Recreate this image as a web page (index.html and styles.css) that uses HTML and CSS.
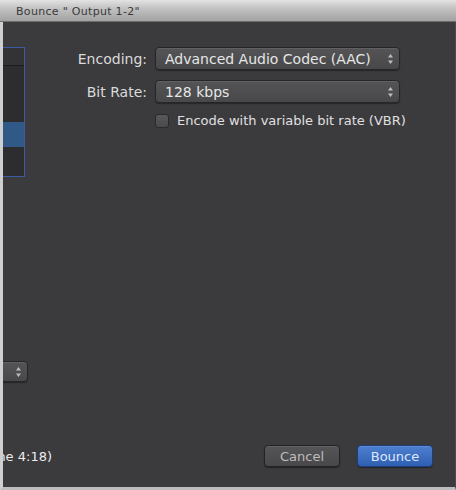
FILE: index.html
```html
<!doctype html>
<html>
<head>
	<meta charset="utf-8" />
	<title>Bounce</title>
	<link rel="stylesheet" href="styles.css">
</head>

<body>
	<div class="window">

		<div class="titlebar">Bounce " Output 1-2"</div>

		<div class="sheet">

			<div class="side">
				<div class="list">
					<div class="list-head"></div>
					<div class="list-row"></div>
					<div class="list-row"></div>
					<div class="list-row selected"></div>
					<div class="list-row"></div>
				</div>
				<div class="popup popup-small">
					<span class="popup-text"></span>
					<svg class="arrows" width="7" height="12" viewBox="0 0 7 12"><path d="M3.5 1 L6 4.5 L1 4.5 Z M3.5 11 L6 7.5 L1 7.5 Z" fill="#bdbdbd"/></svg>
				</div>
				<div class="status">(Realtime 4:18)</div>
			</div>

			<div class="main">
				<div class="form">
					<label class="label">Encoding:</label>
					<div class="popup">
						<span class="popup-text">Advanced Audio Codec (AAC)</span>
						<svg class="arrows" width="7" height="12" viewBox="0 0 7 12"><path d="M3.5 1 L6 4.5 L1 4.5 Z M3.5 11 L6 7.5 L1 7.5 Z" fill="#bdbdbd"/></svg>
					</div>

					<label class="label">Bit Rate:</label>
					<div class="popup">
						<span class="popup-text">128 kbps</span>
						<svg class="arrows" width="7" height="12" viewBox="0 0 7 12"><path d="M3.5 1 L6 4.5 L1 4.5 Z M3.5 11 L6 7.5 L1 7.5 Z" fill="#bdbdbd"/></svg>
					</div>

					<span></span>
					<div class="check">
						<span class="box"></span>
						<span>Encode with variable bit rate (VBR)</span>
					</div>
				</div>

				<div class="buttons">
					<button class="btn">Cancel</button>
					<button class="btn btn-default">Bounce</button>
				</div>
			</div>

		</div>
	</div>
</body>
</html>
```

FILE: styles.css
```css
*, *::before, *::after {
	box-sizing: border-box;
}

html, body {
	margin: 0;
	padding: 0;
	background: #3b3a3d;
}

body {
	font: normal 14px "DejaVu Sans", Verdana, sans-serif;
	color: #dcdcdc;
}

.window {
	width: 456px;
	height: 490px;
	display: flex;
	flex-direction: column;
	overflow: hidden;
}

.titlebar {
	height: 22px;
	flex: none;
	padding: 5px 0 0 16px;
	font-size: 11px;
	letter-spacing: 0.3px;
	color: #3a3a3a;
	background: linear-gradient(#e2e2e2, #c2c2c2 40%, #a2a2a2);
	border-bottom: 1px solid #6e6e6e;
}

.sheet {
	flex: 1;
	display: flex;
	overflow: hidden;
	border-left: 3px solid #cfcfcf;
	border-right: 1px solid #4a494c;
	border-bottom: 3px solid #bdbdbd;
	background: #3b3a3d;
}

/* left pane, mostly scrolled out of view */
.side {
	flex: none;
	width: 230px;
	margin-left: -181px;
	display: flex;
	flex-direction: column;
	align-items: flex-end;
}

.list {
	width: 200px;
	height: 130px;
	margin: 25px 27px 0 0;
	border: 1px solid #3d5ca6;
	background: #2d2d2f;
	display: flex;
	flex-direction: column;
}

.list-head {
	height: 18px;
	background: #333235;
	border-bottom: 1px solid #1c1c1e;
}

.list-row {
	height: 28px;
	background: #2d2d2f;
}

.list-row:last-child {
	flex: 1;
}

.list-row.selected {
	height: 25px;
	background: #315987;
}

.popup {
	height: 23px;
	display: flex;
	align-items: center;
	justify-content: space-between;
	padding: 0 5px 0 9px;
	border: 1px solid #262628;
	border-radius: 4px;
	background: linear-gradient(#545456, #48484a);
	box-shadow: inset 0 1px 0 rgba(255,255,255,0.08), 0 1px 1px rgba(0,0,0,0.35);
	color: #e6e6e6;
	white-space: nowrap;
}

.popup-small {
	width: 120px;
	height: 21px;
	margin: 184px 24px 0 0;
}

.arrows {
	flex: none;
}

.status {
	margin: auto 0 23px;
	font-size: 13px;
	color: #ececec;
	white-space: nowrap;
}

.main {
	flex: 1;
	display: flex;
	flex-direction: column;
	padding: 25px 22px 20px 0;
}

.form {
	display: grid;
	grid-template-columns: 95px 245px;
	column-gap: 8px;
	row-gap: 10px;
	align-items: center;
}

.label {
	text-align: right;
	color: #dadada;
	white-space: nowrap;
}

.check {
	display: flex;
	align-items: center;
	gap: 8px;
	font-size: 13px;
	color: #e0e0e0;
	white-space: nowrap;
}

.box {
	flex: none;
	width: 14px;
	height: 14px;
	border-radius: 3px;
	border: 1px solid #2a2a2c;
	background: linear-gradient(#58585a, #4a4a4c);
}

.buttons {
	margin-top: auto;
	display: flex;
	justify-content: flex-end;
	gap: 17px;
}

.btn {
	width: 76px;
	height: 22px;
	border: 1px solid #232325;
	border-radius: 4px;
	background: linear-gradient(#555557, #48484a);
	box-shadow: inset 0 1px 0 rgba(255,255,255,0.08), 0 1px 1px rgba(0,0,0,0.4);
	font: normal 13px "DejaVu Sans", Verdana, sans-serif;
	color: #bdbdbd;
	padding: 0;
}

.btn-default {
	border-color: #1d3f80;
	background: linear-gradient(#4f7fcf, #2f5fb2);
	color: #dce8ff;
}
```
